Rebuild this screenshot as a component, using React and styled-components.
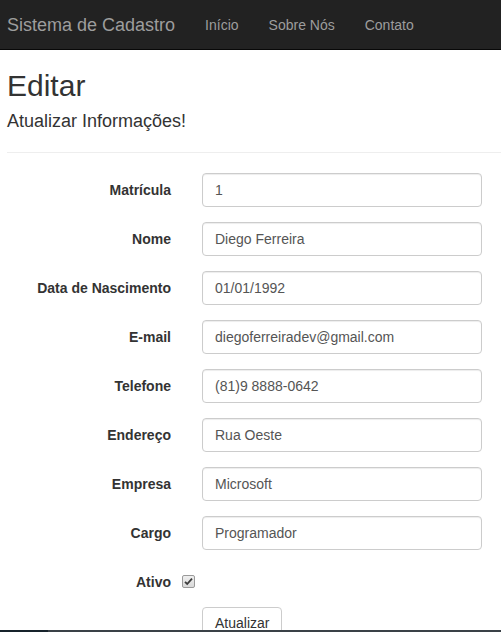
import React from "react";
import styled, { createGlobalStyle } from "styled-components";

const GlobalStyle = createGlobalStyle`
  html {
    overflow: hidden;
  }
  body {
    margin: 0;
    font-family: "Liberation Sans", Arial, sans-serif;
    font-size: 14px;
    line-height: 1.42857;
    color: #333;
    background: #fff;
  }
  * {
    box-sizing: border-box;
  }
`;

const Navbar = styled.nav`
  display: flex;
  align-items: center;
  height: 50px;
  padding-left: 7px;
  background: #222;
  border-bottom: 1px solid #080808;
`;

const Brand = styled.a`
  font-size: 18px;
  line-height: 20px;
  color: #9d9d9d;
  padding-right: 15px;
  text-decoration: none;
`;

const NavLink = styled.a`
  font-size: 14px;
  line-height: 20px;
  color: #9d9d9d;
  padding: 0 15px;
  text-decoration: none;
`;

const Content = styled.main`
  padding-left: 7px;
`;

const Title = styled.h2`
  font-size: 30px;
  font-weight: 500;
  line-height: 1.1;
  margin: 19px 0 10px;
`;

const Subtitle = styled.h4`
  font-size: 18px;
  font-weight: 500;
  line-height: 1.1;
  margin: 10px 0 10px;
`;

const Divider = styled.hr`
  margin: 20px 0;
  border: 0;
  border-top: 1px solid #eee;
`;

const Form = styled.form`
  display: grid;
  grid-template-columns: 164px 280px;
  column-gap: 31px;
  row-gap: 15px;
  align-items: start;
`;

const Label = styled.label`
  padding-top: 7px;
  font-weight: 700;
  text-align: right;
  line-height: 20px;
`;

const Input = styled.input`
  display: block;
  width: 100%;
  height: 34px;
  padding: 6px 12px;
  font-family: inherit;
  font-size: 14px;
  line-height: 1.42857;
  color: #555;
  background: #fff;
  border: 1px solid #ccc;
  border-radius: 4px;
  box-shadow: inset 0 1px 1px rgba(0, 0, 0, 0.075);
  outline: none;
`;

const CheckCell = styled.div`
  margin-left: -20px;
  padding-top: 10px;
  height: 27px;
  svg {
    display: block;
  }
`;

const Button = styled.button`
  grid-column: 2;
  justify-self: start;
  height: 34px;
  padding: 6px 12px;
  font-family: inherit;
  font-size: 14px;
  line-height: 1.42857;
  color: #333;
  background: #fff;
  border: 1px solid #ccc;
  border-radius: 4px;
`;

const BottomBar = styled.div`
  position: fixed;
  left: 0;
  right: 0;
  bottom: 0;
  height: 2px;
  background: linear-gradient(to right, #17232b 0, #17232b 48px, #3a4147 48px);
`;

const fields = [
  ["Matrícula", "1"],
  ["Nome", "Diego Ferreira"],
  ["Data de Nascimento", "01/01/1992"],
  ["E-mail", "diegoferreiradev@gmail.com"],
  ["Telefone", "(81)9 8888-0642"],
  ["Endereço", "Rua Oeste"],
  ["Empresa", "Microsoft"],
  ["Cargo", "Programador"],
];

const Checkbox = () => (
  <svg width="13" height="13" viewBox="0 0 13 13">
    <defs>
      <linearGradient id="cb" x1="0" y1="0" x2="0" y2="1">
        <stop offset="0" stopColor="#f0f0f0" />
        <stop offset="1" stopColor="#d8d8d8" />
      </linearGradient>
    </defs>
    <rect x="0.5" y="0.5" width="12" height="12" rx="1.5" fill="url(#cb)" stroke="#9a9a9a" />
    <path d="M3 6.8 L5.2 9 L10 3.6" fill="none" stroke="#3c3c3c" strokeWidth="1.8" />
  </svg>
);

export default function App() {
  return (
    <>
      <GlobalStyle />
      <Navbar>
        <Brand href="#">Sistema de Cadastro</Brand>
        <NavLink href="#">Início</NavLink>
        <NavLink href="#">Sobre Nós</NavLink>
        <NavLink href="#">Contato</NavLink>
      </Navbar>
      <Content>
        <Title>Editar</Title>
        <Subtitle>Atualizar Informações!</Subtitle>
        <Divider />
        <Form onSubmit={(e) => e.preventDefault()}>
          {fields.map(([label, value]) => (
            <React.Fragment key={label}>
              <Label>{label}</Label>
              <Input defaultValue={value} />
            </React.Fragment>
          ))}
          <Label>Ativo</Label>
          <CheckCell>
            <Checkbox />
          </CheckCell>
          <Button type="submit">Atualizar</Button>
        </Form>
      </Content>
      <BottomBar />
    </>
  );
}
